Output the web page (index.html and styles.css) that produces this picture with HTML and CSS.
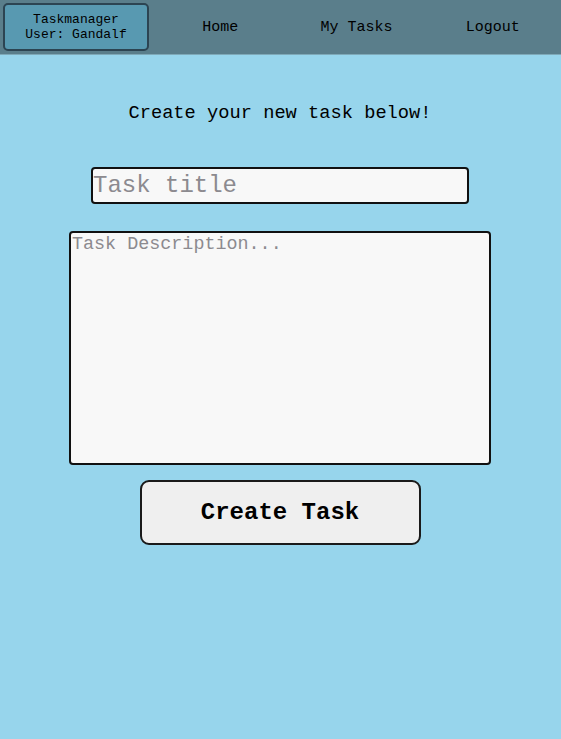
FILE: index.html
```html
<!DOCTYPE html>
<html>
<head>
<meta charset="utf-8">
<link rel="stylesheet" href="styles.css">
</head>
<body>
<header class="topbar">
  <div class="brand">
    <div>Taskmanager</div>
    <div>User: Gandalf</div>
  </div>
  <nav class="nav">
    <a class="nav-link">Home</a>
    <a class="nav-link">My Tasks</a>
    <a class="nav-link">Logout</a>
  </nav>
</header>
<main class="content">
  <h3 class="intro">Create your new task below!</h3>
  <input class="title-input" type="text" placeholder="Task title">
  <textarea class="desc-input" placeholder="Task Description..."></textarea>
  <button class="create-btn">Create Task</button>
</main>
</body>
</html>
```
FILE: styles.css
```css
html, body {
  margin: 0;
  padding: 0;
  height: 100%;
}
body {
  background: #97d5ec;
  font-family: "Courier New", "Nimbus Mono PS", "FreeMono", "Liberation Mono", monospace;
  color: #000;
}
.topbar {
  display: flex;
  align-items: center;
  height: 54px;
  background: #5a7e8b;
  border-bottom: 1px solid #7fa9b8;
}
.brand {
  box-sizing: border-box;
  width: 146px;
  height: 48px;
  margin-left: 3px;
  background: #5899b1;
  border: 2px solid #2c4452;
  border-radius: 5px;
  display: flex;
  flex-direction: column;
  justify-content: center;
  align-items: center;
  font-size: 13px;
  line-height: 15px;
}
.nav {
  flex: 1;
  display: flex;
  margin-left: 3px;
  padding-top: 1px;
}
.nav-link {
  flex: 1;
  text-align: center;
  font-size: 15px;
  color: #000;
}
.content {
  width: 560px;
  display: flex;
  flex-direction: column;
  align-items: center;
}
.intro {
  font-weight: normal;
  font-size: 18.72px;
  line-height: 22px;
  margin: 47px 0 0;
}
.title-input {
  box-sizing: border-box;
  width: 378px;
  height: 37px;
  margin-top: 43px;
  padding: 0;
  background: #f8f8f8;
  border: 2px solid #111;
  border-radius: 4px;
  font-family: inherit;
  font-size: 24px;
  outline: none;
}
.desc-input {
  box-sizing: border-box;
  width: 422px;
  height: 234px;
  margin-top: 27px;
  padding: 1px 1px;
  background: #f8f8f8;
  border: 2px solid #111;
  border-radius: 4px;
  font-family: inherit;
  font-size: 18.4px;
  resize: none;
  outline: none;
}
.title-input::placeholder,
.desc-input::placeholder {
  color: #8c8a8f;
}
.create-btn {
  box-sizing: border-box;
  width: 281px;
  height: 65px;
  margin-top: 15px;
  background: #efefef;
  border: 2px solid #1a1a1a;
  border-radius: 9px;
  font-family: inherit;
  font-weight: bold;
  font-size: 24px;
  color: #000;
}
```
